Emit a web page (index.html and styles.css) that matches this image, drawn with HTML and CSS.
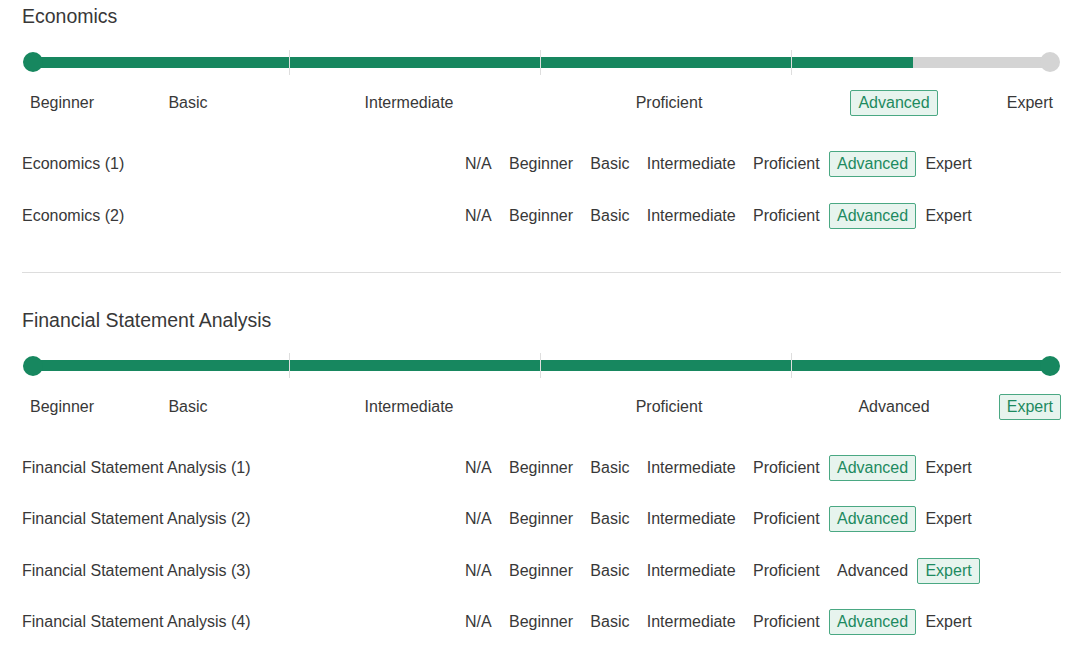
FILE: index.html
```html
<!DOCTYPE html>
<html lang="en">
<head>
    <meta charset="UTF-8">
    <title>Skills</title>
    <link rel="stylesheet" href="styles.css">
</head>
<body>
    <section class="skill">
        <h2 class="skill-title">Economics</h2>
        <div class="slider">
            <div class="track">
                <div class="fill" style="width: 86.5%"></div>
                <span class="tick tick-1"></span>
                <span class="tick tick-2"></span>
                <span class="tick tick-3"></span>
            </div>
            <span class="handle handle-start"></span>
            <span class="handle handle-end"></span>
        </div>
        <div class="scale">
            <span class="level">Beginner</span>
            <span class="level">Basic</span>
            <span class="level">Intermediate</span>
            <span class="level">Proficient</span>
            <span class="level active">Advanced</span>
            <span class="level">Expert</span>
        </div>
        <div class="rows">
            <div class="row">
                <div class="row-name">Economics (1)</div>
                <div class="options">
                    <span class="level">N/A</span>
                    <span class="level">Beginner</span>
                    <span class="level">Basic</span>
                    <span class="level">Intermediate</span>
                    <span class="level">Proficient</span>
                    <span class="level active">Advanced</span>
                    <span class="level">Expert</span>
                </div>
            </div>
            <div class="row">
                <div class="row-name">Economics (2)</div>
                <div class="options">
                    <span class="level">N/A</span>
                    <span class="level">Beginner</span>
                    <span class="level">Basic</span>
                    <span class="level">Intermediate</span>
                    <span class="level">Proficient</span>
                    <span class="level active">Advanced</span>
                    <span class="level">Expert</span>
                </div>
            </div>
        </div>
    </section>

    <div class="divider"></div>

    <section class="skill">
        <h2 class="skill-title">Financial Statement Analysis</h2>
        <div class="slider">
            <div class="track">
                <div class="fill" style="width: 100%"></div>
                <span class="tick tick-1"></span>
                <span class="tick tick-2"></span>
                <span class="tick tick-3"></span>
            </div>
            <span class="handle handle-start"></span>
            <span class="handle handle-end done"></span>
        </div>
        <div class="scale">
            <span class="level">Beginner</span>
            <span class="level">Basic</span>
            <span class="level">Intermediate</span>
            <span class="level">Proficient</span>
            <span class="level">Advanced</span>
            <span class="level active">Expert</span>
        </div>
        <div class="rows">
            <div class="row">
                <div class="row-name">Financial Statement Analysis (1)</div>
                <div class="options">
                    <span class="level">N/A</span>
                    <span class="level">Beginner</span>
                    <span class="level">Basic</span>
                    <span class="level">Intermediate</span>
                    <span class="level">Proficient</span>
                    <span class="level active">Advanced</span>
                    <span class="level">Expert</span>
                </div>
            </div>
            <div class="row">
                <div class="row-name">Financial Statement Analysis (2)</div>
                <div class="options">
                    <span class="level">N/A</span>
                    <span class="level">Beginner</span>
                    <span class="level">Basic</span>
                    <span class="level">Intermediate</span>
                    <span class="level">Proficient</span>
                    <span class="level active">Advanced</span>
                    <span class="level">Expert</span>
                </div>
            </div>
            <div class="row">
                <div class="row-name">Financial Statement Analysis (3)</div>
                <div class="options">
                    <span class="level">N/A</span>
                    <span class="level">Beginner</span>
                    <span class="level">Basic</span>
                    <span class="level">Intermediate</span>
                    <span class="level">Proficient</span>
                    <span class="level">Advanced</span>
                    <span class="level active">Expert</span>
                </div>
            </div>
            <div class="row">
                <div class="row-name">Financial Statement Analysis (4)</div>
                <div class="options">
                    <span class="level">N/A</span>
                    <span class="level">Beginner</span>
                    <span class="level">Basic</span>
                    <span class="level">Intermediate</span>
                    <span class="level">Proficient</span>
                    <span class="level active">Advanced</span>
                    <span class="level">Expert</span>
                </div>
            </div>
        </div>
    </section>
</body>
</html>
```

FILE: styles.css
```css
:root {
    --green: #17875f;
    --green-border: #4aa883;
    --green-light: #e7f4ee;
    --track-empty: #d4d4d4;
    --text-color: #383838;
}
body {
    margin: 0;
    padding: 4px 19px 0 22px;
    font-family: "Liberation Sans", Arial, sans-serif;
    font-size: 16px;
    color: var(--text-color);
    background-color: #ffffff;
}
.skill-title {
    margin: 0;
    font-size: 19.5px;
    font-weight: normal;
    line-height: 24px;
}
.slider {
    position: relative;
    height: 20px;
    margin-top: 24px;
    padding: 0 11px;
    display: flex;
    align-items: center;
}
.track {
    position: relative;
    flex: 1;
    height: 11px;
    background-color: var(--track-empty);
}
.fill {
    height: 100%;
    background-color: var(--green);
}
.tick {
    position: absolute;
    top: -7px;
    width: 1px;
    height: 25px;
    background-color: #dedede;
}
.tick-1 { left: 25.2%; }
.tick-2 { left: 49.9%; }
.tick-3 { left: 74.5%; }
.handle {
    position: absolute;
    top: 0;
    width: 20px;
    height: 20px;
    border-radius: 50%;
}
.handle-start {
    left: 1px;
    background-color: var(--green);
}
.handle-end {
    right: 1px;
    background-color: var(--track-empty);
}
.handle-end.done {
    background-color: var(--green);
}
.scale {
    display: grid;
    grid-template-columns: 76px 180px 262px 258px 192px 1fr;
    margin-top: 18px;
}
.scale .level {
    justify-self: center;
}
.scale .level:first-child {
    justify-self: start;
}
.scale .level:last-child {
    justify-self: end;
}
.level {
    padding: 0 7px;
    border: 1px solid transparent;
    border-radius: 2px;
    line-height: 24px;
    white-space: nowrap;
}
.level.active {
    border-color: var(--green-border);
    background-color: var(--green-light);
    color: #1d8a5f;
}
.rows {
    margin-top: 35px;
    display: flex;
    flex-direction: column;
    gap: 25.5px;
}
.row {
    display: grid;
    grid-template-columns: 435px auto;
    align-items: center;
}
.options {
    display: flex;
    gap: 1.3px;
}
.divider {
    height: 0;
    border-top: 1px solid #dddddd;
    margin: 43px 0 35px;
}
```
